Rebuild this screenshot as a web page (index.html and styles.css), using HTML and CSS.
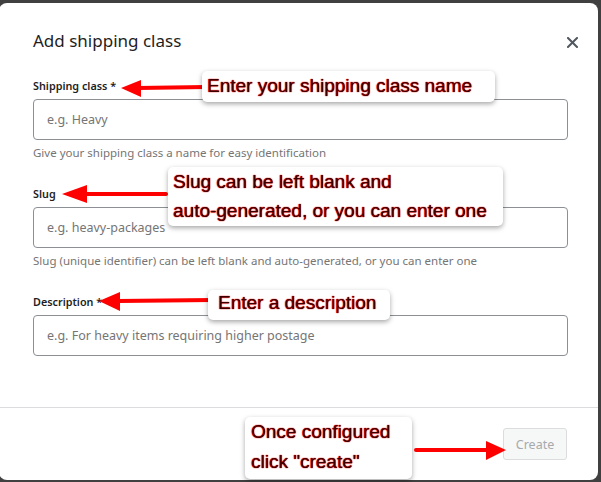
FILE: index.html
```html
<!DOCTYPE html>
<html>
<head>
<meta charset="utf-8">
<link rel="stylesheet" href="styles.css">
</head>
<body>
<div class="modal">
  <div class="modal-body">
    <div class="header">
      <h1 class="title">Add shipping class</h1>
      <button class="close" aria-label="Close">
        <svg width="11" height="11" viewBox="0 0 11 11"><path d="M1 1L10 10M10 1L1 10" stroke="#50575e" stroke-width="2" stroke-linecap="square"/></svg>
      </button>
    </div>
    <div class="field">
      <label class="label">Shipping class *</label>
      <div class="input">e.g. Heavy</div>
      <p class="help">Give your shipping class a name for easy identification</p>
    </div>
    <div class="field">
      <label class="label">Slug</label>
      <div class="input">e.g. heavy-packages</div>
      <p class="help">Slug (unique identifier) can be left blank and auto-generated, or you can enter one</p>
    </div>
    <div class="field">
      <label class="label">Description *</label>
      <div class="input">e.g. For heavy items requiring higher postage</div>
    </div>
  </div>
  <div class="footer">
    <button class="create">Create</button>
  </div>
</div>

<svg class="arrows" width="601" height="482" viewBox="0 0 601 482">
  <g stroke="#ff0000" stroke-width="4" stroke-linecap="round" fill="none">
    <line x1="138" y1="88" x2="206" y2="87"/>
    <line x1="84" y1="194" x2="166" y2="194"/>
    <line x1="118" y1="301" x2="212" y2="300"/>
    <line x1="416" y1="450" x2="488" y2="450"/>
  </g>
  <g fill="#ff0000">
    <polygon points="121,88 141,80 141,97"/>
    <polygon points="62,194 87,185 87,203"/>
    <polygon points="99,301 120,292 120,311"/>
    <polygon points="506,450 486,441 486,460"/>
  </g>
</svg>

<div class="note note1">Enter your shipping class name</div>
<div class="note note2">Slug can be left blank and<br>auto-generated, or you can enter one</div>
<div class="note note3">Enter a description</div>
<div class="note note4">Once configured<br>click "create"</div>
</body>
</html>
```
FILE: styles.css
```css
html, body {
  margin: 0;
  padding: 0;
}
body {
  width: 601px;
  height: 482px;
  background: #404040;
  position: relative;
  overflow: hidden;
  font-family: "Noto Sans", "Open Sans", sans-serif;
}
.modal {
  margin: 3px 0 0 -1px;
  width: 599px;
  height: 477px;
  background: #fff;
  border-radius: 8px;
  display: flex;
  flex-direction: column;
}
.modal-body {
  height: 404px;
  box-sizing: border-box;
  padding: 26px 30px 0 34px;
}
.header {
  display: flex;
  justify-content: space-between;
  align-items: center;
}
.title {
  margin: 0;
  font-size: 17px;
  font-weight: 400;
  line-height: 24px;
  color: #1e1e1e;
}
.close {
  border: 0;
  background: none;
  padding: 0;
  width: 11px;
  height: 11px;
  margin-right: -10px;
  margin-top: 2px;
  display: flex;
}
.field {
  margin-top: 25px;
}
.label {
  display: block;
  font-size: 10.8px;
  font-weight: 600;
  line-height: 16px;
  color: #1e1e1e;
  margin-bottom: 5px;
}
.input {
  height: 41px;
  box-sizing: border-box;
  border: 1px solid #8c8f94;
  border-radius: 4px;
  padding: 0 13px;
  display: flex;
  align-items: center;
  font-size: 12.5px;
  color: #757575;
}
.help {
  margin: 5px 0 0;
  font-size: 11.5px;
  line-height: 16px;
  color: #757575;
}
.footer {
  border-top: 1px solid #dcdcde;
  flex: 1;
  display: flex;
  justify-content: flex-end;
  align-items: flex-start;
  padding: 20px 31px 0 0;
}
.create {
  width: 64px;
  height: 32px;
  background: #f6f7f7;
  border: 1px solid #dcdcde;
  border-radius: 3px;
  color: #a7aaad;
  font-family: "Noto Sans", "Open Sans", sans-serif;
  font-size: 12.5px;
  padding: 0;
}
.arrows {
  position: absolute;
  left: 0;
  top: 0;
}
.note {
  position: absolute;
  background: #fff;
  border-radius: 5px;
  box-shadow: 0 2px 5px rgba(0, 0, 0, 0.35);
  font-family: "Liberation Sans", Arial, sans-serif;
  font-size: 19px;
  color: #3a0000;
  text-shadow: 0 0 1px #ff0000, 0 0 1px #ff0000;
  padding: 0 5px;
  box-sizing: border-box;
  white-space: nowrap;
}
.note1 {
  left: 202px;
  top: 71px;
  width: 293px;
  height: 31px;
  line-height: 28px;
  padding-top: 1px;
}
.note2 {
  left: 168px;
  top: 167px;
  width: 335px;
  height: 59px;
  line-height: 29px;
}
.note3 {
  left: 208px;
  top: 290px;
  width: 182px;
  height: 30px;
  line-height: 25px;
  padding-left: 10px;
}
.note4 {
  left: 245px;
  top: 417px;
  width: 167px;
  height: 62px;
  line-height: 30px;
  padding-left: 6px;
}
```
